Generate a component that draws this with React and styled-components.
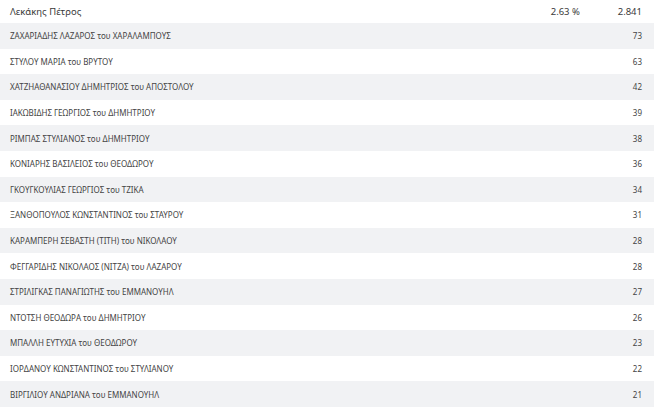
import styled, { createGlobalStyle } from 'styled-components';

const GlobalStyle = createGlobalStyle`
    body {
        margin: 0;
        background: #fff;
        font-family: "Noto Sans", "Open Sans", sans-serif;
    }
`;

const candidates = [
    ['ΖΑΧΑΡΙΑΔΗΣ ΛΑΖΑΡΟΣ του ΧΑΡΑΛΑΜΠΟΥΣ', 73],
    ['ΣΤΥΛΟΥ ΜΑΡΙΑ του ΒΡΥΤΟΥ', 63],
    ['ΧΑΤΖΗΑΘΑΝΑΣΙΟΥ ΔΗΜΗΤΡΙΟΣ του ΑΠΟΣΤΟΛΟΥ', 42],
    ['ΙΑΚΩΒΙΔΗΣ ΓΕΩΡΓΙΟΣ του ΔΗΜΗΤΡΙΟΥ', 39],
    ['ΡΙΜΠΑΣ ΣΤΥΛΙΑΝΟΣ του ΔΗΜΗΤΡΙΟΥ', 38],
    ['ΚΟΝΙΑΡΗΣ ΒΑΣΙΛΕΙΟΣ του ΘΕΟΔΩΡΟΥ', 36],
    ['ΓΚΟΥΓΚΟΥΛΙΑΣ ΓΕΩΡΓΙΟΣ του ΤΖΙΚΑ', 34],
    ['ΞΑΝΘΟΠΟΥΛΟΣ ΚΩΝΣΤΑΝΤΙΝΟΣ του ΣΤΑΥΡΟΥ', 31],
    ['ΚΑΡΑΜΠΕΡΗ ΣΕΒΑΣΤΗ (ΤΙΤΗ) του ΝΙΚΟΛΑΟΥ', 28],
    ['ΦΕΓΓΑΡΙΔΗΣ ΝΙΚΟΛΑΟΣ (ΝΙΤΖΑ) του ΛΑΖΑΡΟΥ', 28],
    ['ΣΤΡΙΛΙΓΚΑΣ ΠΑΝΑΓΙΩΤΗΣ του ΕΜΜΑΝΟΥΗΛ', 27],
    ['ΝΤΟΤΣΗ ΘΕΟΔΩΡΑ του ΔΗΜΗΤΡΙΟΥ', 26],
    ['ΜΠΑΛΛΗ ΕΥΤΥΧΙΑ του ΘΕΟΔΩΡΟΥ', 23],
    ['ΙΟΡΔΑΝΟΥ ΚΩΝΣΤΑΝΤΙΝΟΣ του ΣΤΥΛΙΑΝΟΥ', 22],
    ['ΒΙΡΓΙΛΙΟΥ ΑΝΔΡΙΑΝΑ του ΕΜΜΑΝΟΥΗΛ', 21],
];

const StyledResults = styled.div`
    width: 654px;
`;

const HeaderRow = styled.div`
    display: flex;
    align-items: center;
    height: 23px;
    padding: 0 12px 0 10px;
    color: #3a3a3a;
    font-size: 9.5px;
    .name {
        flex: 1;
    }
    .percent {
        width: 40px;
        margin-right: 27px;
    }
`;

const Row = styled.div`
    display: flex;
    align-items: center;
    justify-content: space-between;
    height: 25.6px;
    padding: 0 12px 0 10px;
    background: ${({$striped}) => ($striped ? '#f1f2f4' : '#fff')};
    color: #444;
    font-size: 8px;
`;

function App() {
    return (
        <>
            <GlobalStyle/>
            <StyledResults>
                <HeaderRow>
                    <span className="name">Λεκάκης Πέτρος</span>
                    <span className="percent">2.63 %</span>
                    <span>2.841</span>
                </HeaderRow>
                {candidates.map(([name, votes], i) => (
                    <Row key={name} $striped={i % 2 === 0}>
                        <span>{name}</span>
                        <span>{votes}</span>
                    </Row>
                ))}
            </StyledResults>
        </>
    );
}

export default App;
